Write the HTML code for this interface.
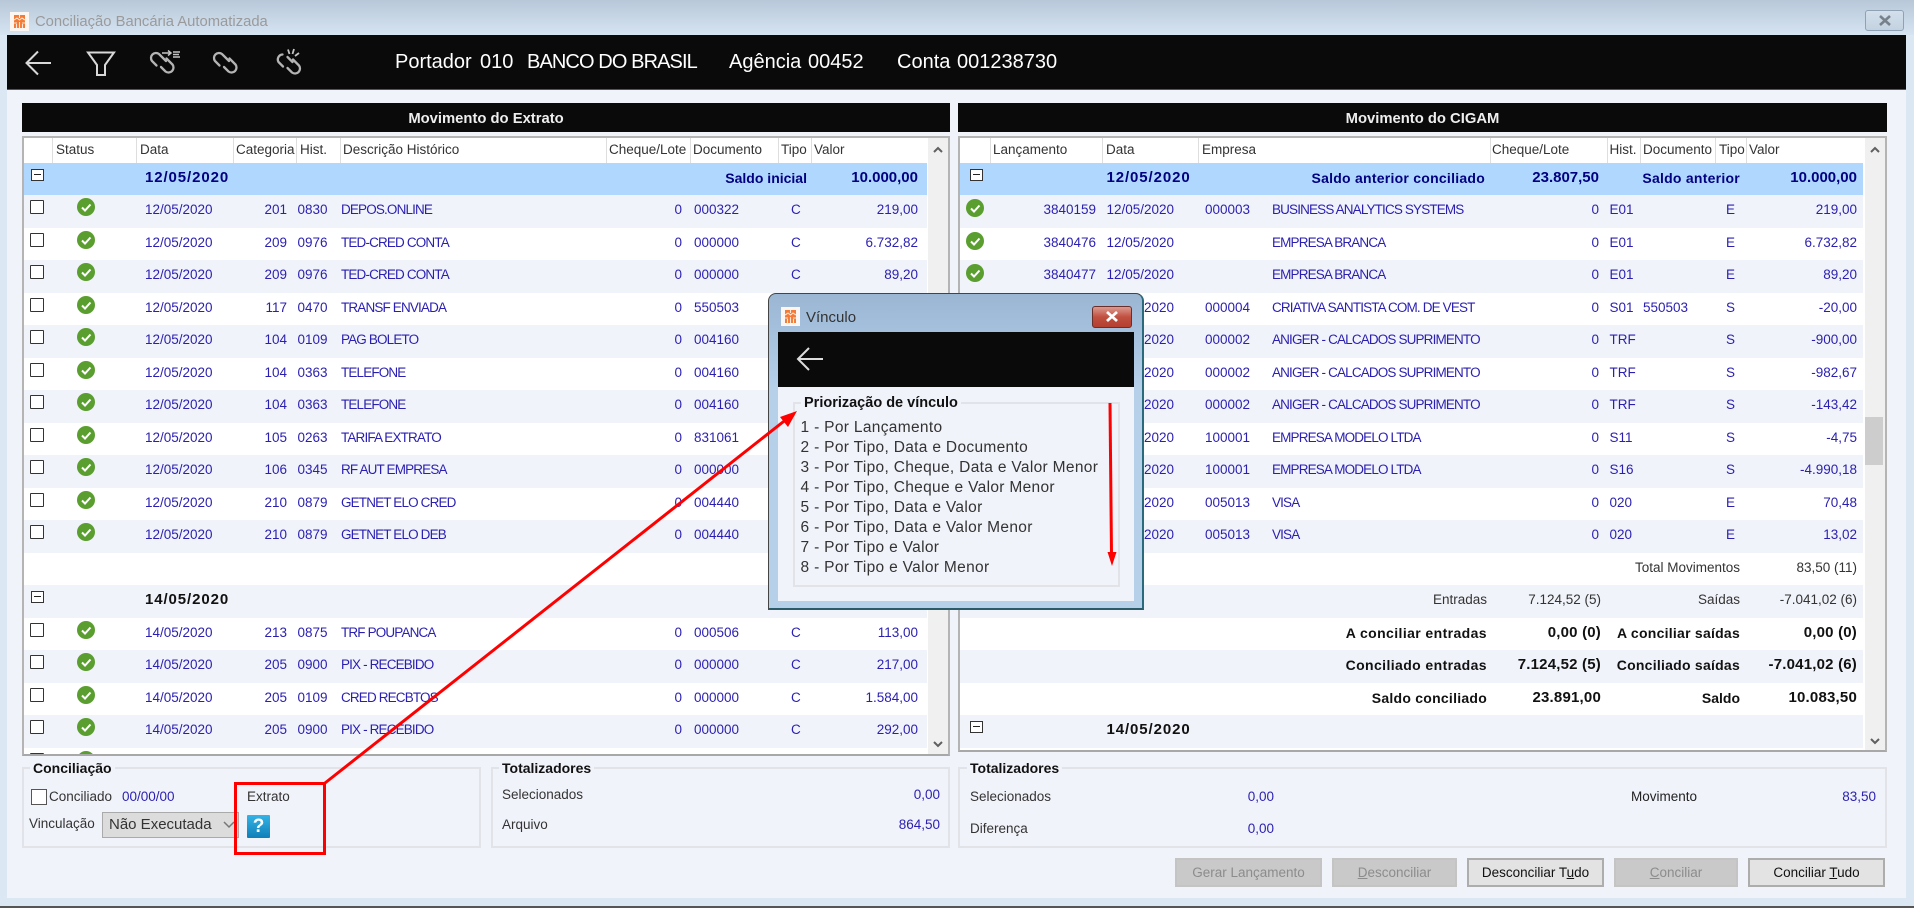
<!DOCTYPE html>
<html lang="pt">
<head>
<meta charset="utf-8">
<title>Conciliação Bancária Automatizada</title>
<style>
html,body{margin:0;padding:0}
body{position:relative;width:1914px;height:908px;overflow:hidden;background:#dbe7f3;font-family:"Liberation Sans",sans-serif;font-size:13.5px;color:#222;filter:blur(.35px)}
div,span,svg{position:absolute;box-sizing:border-box}
span{white-space:nowrap}
u{text-decoration:underline}
.bl{background:#0a0a0a}
#tbar{left:0;top:0;width:1914px;height:35px;background:linear-gradient(#b8c8d8,#d6e4f2)}
#content{left:7px;top:35px;width:1899px;height:863px;background:#f1f3fa}
.tt{color:#fff;font-size:20px;line-height:24px;top:50px}
.hd{color:#eee;font-weight:bold;font-size:14.8px;line-height:20px;top:108.500px;text-align:center}
.gridclip{overflow:hidden;background:#fff}
.gb{border:2px solid #b4b4b4;border-bottom-color:#a8a8a8;pointer-events:none}
.h{top:137px;line-height:26px;color:#333;font-size:13.5px}
.sep{top:137px;width:1px;height:26px;background:#dedede}
.r{height:33px;line-height:30px;color:#2a1fb0}
.a{background:#f1f3fa}
.w{background:#fff}
.g{background:#b0d8ff;color:#000080;font-weight:bold;font-size:14px}
.g0{background:#f1f3fa;color:#111;font-weight:bold;font-size:14px}
.gd{font-size:15px;letter-spacing:.9px}
.gn{font-size:15px}
.cb{left:6px;top:5px;width:14px;height:14px;background:#fff;border:1.5px solid #333;border-radius:1px}
.mn{left:7px;top:6px;width:13px;height:12px;background:#fff;border:1.5px solid #333}
.mn:after{content:"";position:absolute;left:1.500px;top:3.500px;width:7px;height:1.500px;background:#222}
.ok{left:53px;top:3px;width:18px;height:18px}
.d{left:121px}.cat{right:640px}.hi{left:273.5px}.de{left:317px;letter-spacing:-.85px}.ch{right:245px}.dc{left:670px}.ti{left:767px}.va{right:9px}
.ok2{left:6px;top:4px;width:18px;height:18px}
.lc{right:767px}.d2{left:146.5px}.em{left:245px}.nm{left:312px;overflow:hidden;letter-spacing:-.85px;width:218px}.ch2{right:264px}.hi2{left:649.5px}.dc2{left:683px}.ti2{left:766px}.va2{right:6px}
.l1{right:376px;color:#333}.v1{right:262px;color:#333}.l2{right:123px;color:#333}.v2{right:6px;color:#333}
.b{font-weight:bold;color:#111!important;font-size:14px}
.lw{letter-spacing:.25px}
.nb{font-size:15px;letter-spacing:.2px}
.sb{background:#f0f0f0}
.fs{border:2px solid #e2e3e8}
.lg{background:#f1f3fa;font-weight:bold;color:#111;font-size:14px;line-height:16px;padding:0 3px}
.lb{line-height:18px;color:#333}
.bv{line-height:18px;color:#2a1fb0}
.bt{top:858px;height:29px;line-height:25px;text-align:center;font-size:13.5px}
.dis{background:#c9c9c9;border:2px solid #c4c4c4;color:#8c8c8c}
.en{background:#e3e3e3;border:2px solid #adadad;color:#111}
.ml{left:800.5px;font-size:15.5px;line-height:20px;color:#333;letter-spacing:.32px}
</style>
</head>
<body>
<div id="tbar"></div>
<div id="content"></div>

<svg style="left:10px;top:12px" width="19" height="19" viewBox="0 0 19 19"><rect width="19" height="19" fill="#fbf6f2"/><rect x="4" y="3" width="11" height="13" fill="#f47a35"/><path d="M9.500 3v3M4 8l3-2 2.500 2 2.500-2 3 2M4 11h3M12 11h3M6.500 12v4M9.500 10v6M12.500 12v4" stroke="#fde7d8" stroke-width="1.100" fill="none"/></svg>
<span style="left:35px;top:13px;line-height:18px;font-size:14.8px;color:#9a9a9a">Conciliação Bancária Automatizada</span>
<div style="left:1865px;top:10px;width:39px;height:21px;border:1px solid #8fa2b5;border-radius:3px;background:linear-gradient(#d3dfeb,#c3d2e0)"></div>
<svg style="left:1878px;top:14px" width="14" height="13" viewBox="0 0 14 13"><path d="M2 2l10 9M12 2L2 11" stroke="#77818c" stroke-width="2.600"/></svg>

<div class="bl" style="left:7px;top:35px;width:1899px;height:55px;border-bottom:1px solid #555"></div>
<svg style="left:0;top:35px" width="320" height="55" viewBox="0 35 320 55" fill="none" stroke="#d8d8d8" stroke-width="2">
<path d="M51 63H27M38 51.500L26.500 63 38 74.500"/>
<path d="M88 52.500h26L105 65v10h-8V65z"/>
<g stroke="#b4b4b4" stroke-width="2.300" stroke-linecap="round">
<g transform="translate(-63 0)"><path d="M219.500 65.500L215 61A5 5 0 0 1 222 54L229 61"/><path d="M229.500 58.500L235.500 64.500A5 5 0 0 1 228.500 71.500L224 67"/></g>
<path d="M219.500 65.500L215 61A5 5 0 0 1 222 54L229 61"/><path d="M229.500 58.500L235.500 64.500A5 5 0 0 1 228.500 71.500L224 67"/>
<g transform="translate(63.500 1)"><path d="M219.500 65.500L215 61A5 5 0 0 1 219 53.500M224 56L229 61"/><path d="M229.500 58.500L235.500 64.500A5 5 0 0 1 228.500 71.500L224 67"/></g>
</g>
<path d="M162 53h9M168 50.500l3 2.500-3 2.500M173 52h7M173 54.500h6M173 57h7" stroke-width="1.500" stroke="#c4c4c4"/>
<path d="M288 49.500l1.500 4.500M294 49l-1.500 5M299 53l-4 3" stroke="#c4c4c4" stroke-width="1.800"/>
</svg>
<span class="tt" style="left:395px">Portador</span>
<span class="tt" style="left:480px">010</span>
<span class="tt" style="left:527px;letter-spacing:-.9px">BANCO DO BRASIL</span>
<span class="tt" style="left:729px">Agência</span>
<span class="tt" style="left:808px">00452</span>
<span class="tt" style="left:897px">Conta</span>
<span class="tt" style="left:957px">001238730</span>

<div class="bl" style="left:22px;top:103px;width:928px;height:29px"></div>
<div class="bl" style="left:958px;top:103px;width:929px;height:29px"></div>
<span class="hd" style="left:22px;width:928px">Movimento do Extrato</span>
<span class="hd" style="left:958px;width:929px">Movimento do CIGAM</span>

<!-- LEFT GRID -->
<div class="gridclip" style="left:22px;top:136px;width:928px;height:620px">
<div style="left:-22px;top:-136px;width:1914px;height:908px">
<span class="h" style="left:56px">Status</span><span class="h" style="left:140px">Data</span><span class="h" style="left:236px">Categoria</span><span class="h" style="left:300px">Hist.</span><span class="h" style="left:343px">Descrição Histórico</span><span class="h" style="left:609px">Cheque/Lote</span><span class="h" style="left:693px">Documento</span><span class="h" style="left:781px">Tipo</span><span class="h" style="left:814px">Valor</span>
<div class="sep" style="left:52px"></div><div class="sep" style="left:136px"></div><div class="sep" style="left:233px"></div><div class="sep" style="left:296px"></div><div class="sep" style="left:340px"></div><div class="sep" style="left:606px"></div><div class="sep" style="left:690px"></div><div class="sep" style="left:778px"></div><div class="sep" style="left:811px"></div>

<div class="r g" style="left:24px;top:163px;width:903px;height:32px"><div class="mn"></div><span class="d gd">12/05/2020</span><span style="right:120px">Saldo inicial</span><span class="va gn">10.000,00</span></div>

<div class="r a" style="left:24px;top:195px;width:903px"><div class="cb"></div><svg class="ok" viewBox="0 0 18 18"><circle cx="9" cy="9" r="9" fill="#5a9e2f"/><path d="M5 9.500l3 3 5.500-6" stroke="#fff" stroke-width="2" fill="none"/></svg><span class="d">12/05/2020</span><span class="cat">201</span><span class="hi">0830</span><span class="de">DEPOS.ONLINE</span><span class="ch">0</span><span class="dc">000322</span><span class="ti">C</span><span class="va">219,00</span></div>
<div class="r w" style="left:24px;top:227.5px;width:903px"><div class="cb"></div><svg class="ok" viewBox="0 0 18 18"><circle cx="9" cy="9" r="9" fill="#5a9e2f"/><path d="M5 9.500l3 3 5.500-6" stroke="#fff" stroke-width="2" fill="none"/></svg><span class="d">12/05/2020</span><span class="cat">209</span><span class="hi">0976</span><span class="de">TED-CRED CONTA</span><span class="ch">0</span><span class="dc">000000</span><span class="ti">C</span><span class="va">6.732,82</span></div>
<div class="r a" style="left:24px;top:260px;width:903px"><div class="cb"></div><svg class="ok" viewBox="0 0 18 18"><circle cx="9" cy="9" r="9" fill="#5a9e2f"/><path d="M5 9.500l3 3 5.500-6" stroke="#fff" stroke-width="2" fill="none"/></svg><span class="d">12/05/2020</span><span class="cat">209</span><span class="hi">0976</span><span class="de">TED-CRED CONTA</span><span class="ch">0</span><span class="dc">000000</span><span class="ti">C</span><span class="va">89,20</span></div>
<div class="r w" style="left:24px;top:292.5px;width:903px"><div class="cb"></div><svg class="ok" viewBox="0 0 18 18"><circle cx="9" cy="9" r="9" fill="#5a9e2f"/><path d="M5 9.500l3 3 5.500-6" stroke="#fff" stroke-width="2" fill="none"/></svg><span class="d">12/05/2020</span><span class="cat">117</span><span class="hi">0470</span><span class="de">TRANSF ENVIADA</span><span class="ch">0</span><span class="dc">550503</span></div>
<div class="r a" style="left:24px;top:325px;width:903px"><div class="cb"></div><svg class="ok" viewBox="0 0 18 18"><circle cx="9" cy="9" r="9" fill="#5a9e2f"/><path d="M5 9.500l3 3 5.500-6" stroke="#fff" stroke-width="2" fill="none"/></svg><span class="d">12/05/2020</span><span class="cat">104</span><span class="hi">0109</span><span class="de">PAG BOLETO</span><span class="ch">0</span><span class="dc">004160</span></div>
<div class="r w" style="left:24px;top:357.5px;width:903px"><div class="cb"></div><svg class="ok" viewBox="0 0 18 18"><circle cx="9" cy="9" r="9" fill="#5a9e2f"/><path d="M5 9.500l3 3 5.500-6" stroke="#fff" stroke-width="2" fill="none"/></svg><span class="d">12/05/2020</span><span class="cat">104</span><span class="hi">0363</span><span class="de">TELEFONE</span><span class="ch">0</span><span class="dc">004160</span></div>
<div class="r a" style="left:24px;top:390px;width:903px"><div class="cb"></div><svg class="ok" viewBox="0 0 18 18"><circle cx="9" cy="9" r="9" fill="#5a9e2f"/><path d="M5 9.500l3 3 5.500-6" stroke="#fff" stroke-width="2" fill="none"/></svg><span class="d">12/05/2020</span><span class="cat">104</span><span class="hi">0363</span><span class="de">TELEFONE</span><span class="ch">0</span><span class="dc">004160</span></div>
<div class="r w" style="left:24px;top:422.5px;width:903px"><div class="cb"></div><svg class="ok" viewBox="0 0 18 18"><circle cx="9" cy="9" r="9" fill="#5a9e2f"/><path d="M5 9.500l3 3 5.500-6" stroke="#fff" stroke-width="2" fill="none"/></svg><span class="d">12/05/2020</span><span class="cat">105</span><span class="hi">0263</span><span class="de">TARIFA EXTRATO</span><span class="ch">0</span><span class="dc">831061</span></div>
<div class="r a" style="left:24px;top:455px;width:903px"><div class="cb"></div><svg class="ok" viewBox="0 0 18 18"><circle cx="9" cy="9" r="9" fill="#5a9e2f"/><path d="M5 9.500l3 3 5.500-6" stroke="#fff" stroke-width="2" fill="none"/></svg><span class="d">12/05/2020</span><span class="cat">106</span><span class="hi">0345</span><span class="de">RF AUT EMPRESA</span><span class="ch">0</span><span class="dc">000000</span></div>
<div class="r w" style="left:24px;top:487.5px;width:903px"><div class="cb"></div><svg class="ok" viewBox="0 0 18 18"><circle cx="9" cy="9" r="9" fill="#5a9e2f"/><path d="M5 9.500l3 3 5.500-6" stroke="#fff" stroke-width="2" fill="none"/></svg><span class="d">12/05/2020</span><span class="cat">210</span><span class="hi">0879</span><span class="de">GETNET ELO CRED</span><span class="ch">0</span><span class="dc">004440</span></div>
<div class="r a" style="left:24px;top:520px;width:903px"><div class="cb"></div><svg class="ok" viewBox="0 0 18 18"><circle cx="9" cy="9" r="9" fill="#5a9e2f"/><path d="M5 9.500l3 3 5.500-6" stroke="#fff" stroke-width="2" fill="none"/></svg><span class="d">12/05/2020</span><span class="cat">210</span><span class="hi">0879</span><span class="de">GETNET ELO DEB</span><span class="ch">0</span><span class="dc">004440</span></div>
<div class="r w" style="left:24px;top:552.5px;width:903px"></div>
<div class="r g0" style="left:24px;top:585px;width:903px"><div class="mn"></div><span class="d gd">14/05/2020</span></div>
<div class="r w" style="left:24px;top:617.500px;width:903px"><div class="cb"></div><svg class="ok" viewBox="0 0 18 18"><circle cx="9" cy="9" r="9" fill="#5a9e2f"/><path d="M5 9.500l3 3 5.500-6" stroke="#fff" stroke-width="2" fill="none"/></svg><span class="d">14/05/2020</span><span class="cat">213</span><span class="hi">0875</span><span class="de">TRF POUPANCA</span><span class="ch">0</span><span class="dc">000506</span><span class="ti">C</span><span class="va">113,00</span></div>
<div class="r a" style="left:24px;top:650px;width:903px"><div class="cb"></div><svg class="ok" viewBox="0 0 18 18"><circle cx="9" cy="9" r="9" fill="#5a9e2f"/><path d="M5 9.500l3 3 5.500-6" stroke="#fff" stroke-width="2" fill="none"/></svg><span class="d">14/05/2020</span><span class="cat">205</span><span class="hi">0900</span><span class="de">PIX - RECEBIDO</span><span class="ch">0</span><span class="dc">000000</span><span class="ti">C</span><span class="va">217,00</span></div>
<div class="r w" style="left:24px;top:682.5px;width:903px"><div class="cb"></div><svg class="ok" viewBox="0 0 18 18"><circle cx="9" cy="9" r="9" fill="#5a9e2f"/><path d="M5 9.500l3 3 5.500-6" stroke="#fff" stroke-width="2" fill="none"/></svg><span class="d">14/05/2020</span><span class="cat">205</span><span class="hi">0109</span><span class="de">CRED RECBTOS</span><span class="ch">0</span><span class="dc">000000</span><span class="ti">C</span><span class="va">1.584,00</span></div>
<div class="r a" style="left:24px;top:715px;width:903px"><div class="cb"></div><svg class="ok" viewBox="0 0 18 18"><circle cx="9" cy="9" r="9" fill="#5a9e2f"/><path d="M5 9.500l3 3 5.500-6" stroke="#fff" stroke-width="2" fill="none"/></svg><span class="d">14/05/2020</span><span class="cat">205</span><span class="hi">0900</span><span class="de">PIX - RECEBIDO</span><span class="ch">0</span><span class="dc">000000</span><span class="ti">C</span><span class="va">292,00</span></div>
<div class="r w" style="left:24px;top:747.5px;width:903px"><div class="cb"></div><svg class="ok" viewBox="0 0 18 18"><circle cx="9" cy="9" r="9" fill="#5a9e2f"/></svg></div>

<div class="sb" style="left:928px;top:137px;width:20px;height:617px"></div>
<svg style="left:932px;top:145px" width="12" height="10" viewBox="0 0 12 10"><path d="M2 7l4-4 4 4" stroke="#606060" stroke-width="2" fill="none"/></svg>
<svg style="left:932px;top:739px" width="12" height="10" viewBox="0 0 12 10"><path d="M2 3l4 4 4-4" stroke="#606060" stroke-width="2" fill="none"/></svg>
</div></div>
<div class="gb" style="left:22px;top:136px;width:928px;height:620px"></div>

<!-- RIGHT GRID -->
<div class="gridclip" style="left:958px;top:136px;width:929px;height:616px">
<div style="left:-958px;top:-136px;width:1914px;height:908px">
<span class="h" style="left:993px">Lançamento</span><span class="h" style="left:1106px">Data</span><span class="h" style="left:1202px">Empresa</span><span class="h" style="left:1492px">Cheque/Lote</span><span class="h" style="left:1609.5px">Hist.</span><span class="h" style="left:1643px">Documento</span><span class="h" style="left:1719px">Tipo</span><span class="h" style="left:1749px">Valor</span>
<div class="sep" style="left:990px"></div><div class="sep" style="left:1102px"></div><div class="sep" style="left:1198px"></div><div class="sep" style="left:1490px"></div><div class="sep" style="left:1607px"></div><div class="sep" style="left:1640px"></div><div class="sep" style="left:1715px"></div><div class="sep" style="left:1746px"></div>

<div class="r g" style="left:960px;top:163px;width:903px;height:32px"><div class="mn" style="left:10px"></div><span class="d2 gd">12/05/2020</span><span class="lw" style="right:378px">Saldo anterior conciliado</span><span class="ch2 gn">23.807,50</span><span class="lw" style="right:123px">Saldo anterior</span><span class="va2 gn">10.000,00</span></div>

<div class="r a" style="left:960px;top:195px;width:903px"><svg class="ok2" viewBox="0 0 18 18"><circle cx="9" cy="9" r="9" fill="#5a9e2f"/><path d="M5 9.500l3 3 5.500-6" stroke="#fff" stroke-width="2" fill="none"/></svg><span class="lc">3840159</span><span class="d2">12/05/2020</span><span class="em">000003</span><span class="nm">BUSINESS ANALYTICS SYSTEMS</span><span class="ch2">0</span><span class="hi2">E01</span><span class="ti2">E</span><span class="va2">219,00</span></div>
<div class="r w" style="left:960px;top:227.5px;width:903px"><svg class="ok2" viewBox="0 0 18 18"><circle cx="9" cy="9" r="9" fill="#5a9e2f"/><path d="M5 9.500l3 3 5.500-6" stroke="#fff" stroke-width="2" fill="none"/></svg><span class="lc">3840476</span><span class="d2">12/05/2020</span><span class="nm">EMPRESA BRANCA</span><span class="ch2">0</span><span class="hi2">E01</span><span class="ti2">E</span><span class="va2">6.732,82</span></div>
<div class="r a" style="left:960px;top:260px;width:903px"><svg class="ok2" viewBox="0 0 18 18"><circle cx="9" cy="9" r="9" fill="#5a9e2f"/><path d="M5 9.500l3 3 5.500-6" stroke="#fff" stroke-width="2" fill="none"/></svg><span class="lc">3840477</span><span class="d2">12/05/2020</span><span class="nm">EMPRESA BRANCA</span><span class="ch2">0</span><span class="hi2">E01</span><span class="ti2">E</span><span class="va2">89,20</span></div>
<div class="r w" style="left:960px;top:292.5px;width:903px"><span class="d2">12/05/2020</span><span class="em">000004</span><span class="nm">CRIATIVA SANTISTA COM. DE VEST</span><span class="ch2">0</span><span class="hi2">S01</span><span class="dc2">550503</span><span class="ti2">S</span><span class="va2">-20,00</span></div>
<div class="r a" style="left:960px;top:325px;width:903px"><span class="d2">12/05/2020</span><span class="em">000002</span><span class="nm">ANIGER - CALCADOS SUPRIMENTO</span><span class="ch2">0</span><span class="hi2">TRF</span><span class="ti2">S</span><span class="va2">-900,00</span></div>
<div class="r w" style="left:960px;top:357.5px;width:903px"><span class="d2">12/05/2020</span><span class="em">000002</span><span class="nm">ANIGER - CALCADOS SUPRIMENTO</span><span class="ch2">0</span><span class="hi2">TRF</span><span class="ti2">S</span><span class="va2">-982,67</span></div>
<div class="r a" style="left:960px;top:390px;width:903px"><span class="d2">12/05/2020</span><span class="em">000002</span><span class="nm">ANIGER - CALCADOS SUPRIMENTO</span><span class="ch2">0</span><span class="hi2">TRF</span><span class="ti2">S</span><span class="va2">-143,42</span></div>
<div class="r w" style="left:960px;top:422.5px;width:903px"><span class="d2">12/05/2020</span><span class="em">100001</span><span class="nm">EMPRESA MODELO LTDA</span><span class="ch2">0</span><span class="hi2">S11</span><span class="ti2">S</span><span class="va2">-4,75</span></div>
<div class="r a" style="left:960px;top:455px;width:903px"><span class="d2">12/05/2020</span><span class="em">100001</span><span class="nm">EMPRESA MODELO LTDA</span><span class="ch2">0</span><span class="hi2">S16</span><span class="ti2">S</span><span class="va2">-4.990,18</span></div>
<div class="r w" style="left:960px;top:487.5px;width:903px"><span class="d2">12/05/2020</span><span class="em">005013</span><span class="nm">VISA</span><span class="ch2">0</span><span class="hi2">020</span><span class="ti2">E</span><span class="va2">70,48</span></div>
<div class="r a" style="left:960px;top:520px;width:903px"><span class="d2">12/05/2020</span><span class="em">005013</span><span class="nm">VISA</span><span class="ch2">0</span><span class="hi2">020</span><span class="ti2">E</span><span class="va2">13,02</span></div>
<div class="r w" style="left:960px;top:552.5px;width:903px"><span class="l2">Total Movimentos</span><span class="v2">83,50 (11)</span></div>
<div class="r a" style="left:960px;top:585px;width:903px"><span class="l1">Entradas</span><span class="v1">7.124,52 (5)</span><span class="l2">Saídas</span><span class="v2">-7.041,02 (6)</span></div>
<div class="r w" style="left:960px;top:617.500px;width:903px"><span class="l1 b lw" style="letter-spacing:.4px">A conciliar entradas</span><span class="v1 b nb">0,00 (0)</span><span class="l2 b lw">A conciliar saídas</span><span class="v2 b nb">0,00 (0)</span></div>
<div class="r a" style="left:960px;top:650px;width:903px"><span class="l1 b lw" style="letter-spacing:.4px">Conciliado entradas</span><span class="v1 b nb">7.124,52 (5)</span><span class="l2 b lw">Conciliado saídas</span><span class="v2 b nb">-7.041,02 (6)</span></div>
<div class="r w" style="left:960px;top:682.5px;width:903px"><span class="l1 b lw">Saldo conciliado</span><span class="v1 b nb">23.891,00</span><span class="l2 b">Saldo</span><span class="v2 b nb">10.083,50</span></div>
<div class="r g0" style="left:960px;top:715px;width:903px"><div class="mn" style="left:10px"></div><span class="d2 gd">14/05/2020</span></div>

<div class="sb" style="left:1865px;top:137px;width:21px;height:613px"></div>
<div style="left:1865px;top:417px;width:18px;height:48px;background:#cdcdcd"></div>
<svg style="left:1869px;top:145px" width="12" height="10" viewBox="0 0 12 10"><path d="M2 7l4-4 4 4" stroke="#606060" stroke-width="2" fill="none"/></svg>
<svg style="left:1869px;top:736px" width="12" height="10" viewBox="0 0 12 10"><path d="M2 3l4 4 4-4" stroke="#606060" stroke-width="2" fill="none"/></svg>
</div></div>
<div class="gb" style="left:958px;top:136px;width:929px;height:616px"></div>

<!-- BOTTOM PANELS -->
<div class="fs" style="left:22px;top:767px;width:459px;height:81px"></div>
<span class="lg" style="left:30px;top:760px">Conciliação</span>
<div style="left:31px;top:789px;width:16px;height:16px;background:#fff;border:1.5px solid #555"></div>
<span class="lb" style="left:49px;top:788px">Conciliado</span>
<span class="bv" style="left:122px;top:788px">00/00/00</span>
<span class="lb" style="left:247px;top:788px">Extrato</span>
<span class="lb" style="left:29px;top:815px">Vinculação</span>
<div style="left:102px;top:812px;width:137px;height:26px;background:#dcdcdc;border:1px solid #aaa"></div>
<span class="lb" style="left:109px;top:816px;font-size:15px;color:#333">Não Executada</span>
<svg style="left:222px;top:820px" width="14" height="10" viewBox="0 0 14 10"><path d="M2 2l5 5 5-5" stroke="#777" stroke-width="1.500" fill="none"/></svg>
<div style="left:247px;top:815px;width:23px;height:23px;background:linear-gradient(#34b3e6,#0f7fb8);border-radius:1px;color:#fff;font-weight:bold;font-size:19px;line-height:23px;text-align:center;font-family:'Liberation Sans',sans-serif">?</div>

<div class="fs" style="left:491px;top:767px;width:459px;height:81px"></div>
<span class="lg" style="left:499px;top:760px">Totalizadores</span>
<span class="lb" style="left:502px;top:786px">Selecionados</span>
<span class="lb" style="left:502px;top:816px">Arquivo</span>
<span class="bv" style="right:974px;top:786px">0,00</span>
<span class="bv" style="right:974px;top:816px">864,50</span>

<div class="fs" style="left:958px;top:767px;width:929px;height:81px"></div>
<span class="lg" style="left:967px;top:760px">Totalizadores</span>
<span class="lb" style="left:970px;top:788px">Selecionados</span>
<span class="lb" style="left:970px;top:820px">Diferença</span>
<span class="bv" style="right:640px;top:788px">0,00</span>
<span class="bv" style="right:640px;top:820px">0,00</span>
<span class="lb" style="left:1631px;top:788px;color:#222">Movimento</span>
<span class="bv" style="right:38px;top:788px">83,50</span>

<div class="bt dis" style="left:1175px;width:147px">Gerar Lançamento</div>
<div class="bt dis" style="left:1332px;width:125px"><u>D</u>esconciliar</div>
<div class="bt en" style="left:1467px;width:137px">Desconciliar T<u>u</u>do</div>
<div class="bt dis" style="left:1614px;width:124px"><u>C</u>onciliar</div>
<div class="bt en" style="left:1748px;width:137px">Conciliar <u>T</u>udo</div>

<div style="left:0;top:906px;width:1914px;height:2px;background:#555"></div>

<!-- MODAL -->
<div style="left:768px;top:293px;width:376px;height:317px;border:1px solid #444;border-bottom:2px solid #2b5a68;border-right:2px solid #2b6a7a;border-radius:8px 8px 0 0;background:linear-gradient(#9ab6d3,#b6d0ea 30%,#b6d0ea)"></div>
<svg style="left:781px;top:307px" width="19" height="19" viewBox="0 0 19 19"><rect width="19" height="19" fill="#fbf6f2"/><rect x="4" y="3" width="11" height="13" fill="#f47a35"/><path d="M9.500 3v3M4 8l3-2 2.500 2 2.500-2 3 2M4 11h3M12 11h3M6.500 12v4M9.500 10v6M12.500 12v4" stroke="#fde7d8" stroke-width="1.100" fill="none"/></svg>
<span style="left:806px;top:309px;line-height:18px;font-size:15px;color:#333">Vínculo</span>
<div style="left:1092px;top:306px;width:40px;height:22px;border:1px solid #6a2f28;border-radius:3px;background:linear-gradient(#dc9a90,#c05040 50%,#b33f30)"></div>
<svg style="left:1105px;top:310px" width="14" height="13" viewBox="0 0 14 13"><path d="M2 2l10 9M12 2L2 11" stroke="#fff" stroke-width="2.800"/></svg>
<div class="bl" style="left:778px;top:332px;width:356px;height:55px"></div>
<svg style="left:790px;top:340px" width="40" height="40" viewBox="0 0 40 40"><path d="M33 19H8M19 8L8 19l11 11" stroke="#ddd" stroke-width="2" fill="none"/></svg>
<div style="left:778px;top:387px;width:356px;height:214px;background:#f1f3fa"></div>
<div class="fs" style="left:793px;top:402px;width:327px;height:185px"></div>
<span class="lg" style="left:801px;top:395px;font-size:14.5px">Priorização de vínculo</span>
<span class="ml" style="top:418px">1 - Por Lançamento</span>
<span class="ml" style="top:438px">2 - Por Tipo, Data e Documento</span>
<span class="ml" style="top:458px">3 - Por Tipo, Cheque, Data e Valor Menor</span>
<span class="ml" style="top:478px">4 - Por Tipo, Cheque e Valor Menor</span>
<span class="ml" style="top:498px">5 - Por Tipo, Data e Valor</span>
<span class="ml" style="top:518px">6 - Por Tipo, Data e Valor Menor</span>
<span class="ml" style="top:538px">7 - Por Tipo e Valor</span>
<span class="ml" style="top:558px">8 - Por Tipo e Valor Menor</span>

<!-- RED ANNOTATIONS -->
<div style="left:234px;top:782px;width:92px;height:73px;border:3px solid #f00"></div>
<svg style="left:0;top:0" width="1914" height="908" viewBox="0 0 1914 908" fill="none">
<path d="M325 783L788 418" stroke="#f00" stroke-width="3"/>
<path d="M797 411L780 417 788 427z" fill="#f00"/>
<path d="M1110 403L1111.500 555" stroke="#f00" stroke-width="3"/>
<path d="M1107.500 552h9L1112 566z" fill="#f00"/>
</svg>
</body>
</html>
